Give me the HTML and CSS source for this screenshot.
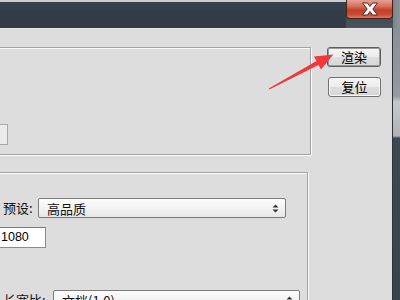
FILE: index.html
```html
<!DOCTYPE html>
<html>
<head>
<meta charset="utf-8">
<link rel="stylesheet" href="styles.css">
</head>
<body>
<div class="window">
  <div class="titlebar">
    <div class="title-fill"></div>
    <div class="close">
      <svg width="20" height="14" viewBox="0 0 20 14"><path d="M2.5 1 L7.5 1 L10 4.5 L12.5 1 L17.5 1 L12.8 7 L17.5 13 L12.5 13 L10 9.5 L7.5 13 L2.5 13 L7.2 7 Z" fill="#ffffff" stroke="#4e2a24" stroke-width="1"/></svg>
    </div>
    <div class="frame-corner"></div>
  </div>
  <div class="body">
    <div class="client">
      <div class="left">
        <div class="group g1"><div class="smallinput"></div></div>
        <div class="group g2">
          <div class="row r1">
            <span class="label l1">预设:</span>
            <div class="select s1"><span>高品质</span>
              <svg width="7" height="9" viewBox="0 0 7 9"><path d="M3.5 0.5 L6.5 3.5 L0.5 3.5 Z M3.5 8.5 L6.5 5.5 L0.5 5.5 Z" fill="#333"/></svg>
            </div>
          </div>
          <div class="row r2"><div class="input">1080</div></div>
          <div class="row r3">
            <span class="label l3">长宽比:</span>
            <div class="select s2"><span>文档(1.0)</span>
              <svg width="7" height="9" viewBox="0 0 7 9"><path d="M3.5 0.5 L6.5 3.5 L0.5 3.5 Z M3.5 8.5 L6.5 5.5 L0.5 5.5 Z" fill="#333"/></svg>
            </div>
          </div>
        </div>
      </div>
      <div class="right">
        <div class="btn btn-default">渲染</div>
        <div class="btn btn-reset">复位</div>
      </div>
    </div>
    <div class="frame"></div>
  </div>
  <svg class="arrow" width="400" height="300" viewBox="0 0 400 300">
    <polygon points="269.3,89.6 268.7,88.4 316.5,61.1 314,56.4 333.4,54.5 321,69.6 318.5,64.9" fill="#ee3a3a"/>
  </svg>
</div>
</body>
</html>
```

FILE: styles.css
```css
html, body {
  margin: 0;
  padding: 0;
  width: 400px;
  height: 300px;
  overflow: hidden;
  background: #dddddd;
}

.window {
  position: relative;
  width: 400px;
  height: 300px;
  overflow: hidden;
  font-family: "Noto Sans CJK SC", "Liberation Sans", sans-serif;
  color: #111;
}

.titlebar {
  display: flex;
  height: 28px;
}

.title-fill {
  flex: 1;
  box-sizing: border-box;
  border-top: 2px solid #c9ccd0;
  background: linear-gradient(to bottom, #3a444e 0%, #333d47 40%, #323c46 100%);
}

.close {
  position: relative;
  width: 47px;
  height: 28px;
  box-sizing: border-box;
  background: linear-gradient(to bottom, #3a444e, #4a535c);
}

.close::after {
  content: "";
  position: absolute;
  left: 0;
  top: 0;
  width: 47px;
  height: 19px;
  box-sizing: border-box;
  border: 1px solid #4a2018;
  border-top: none;
  border-radius: 0 0 4px 4px;
  background: linear-gradient(to bottom, #e6a294 0%, #d7705c 35%, #c4402a 55%, #c94a32 80%, #dd7a60 100%);
  z-index: 0;
}

.close svg {
  position: absolute;
  left: 14px;
  top: 2px;
  z-index: 1;
  display: block;
}

.frame-corner {
  width: 7px;
  background: linear-gradient(to right, #7d848b, #8f959b);
}

.body {
  display: flex;
  height: 272px;
}

.client {
  width: 392px;
  box-sizing: border-box;
  border-top: 1px solid #e6e6e6;
  display: flex;
  align-items: flex-start;
}

.left {
  margin-left: -20px;
  width: 331px;
  flex: none;
}

.group {
  box-sizing: border-box;
  border: 1px solid #a3a3a3;
  box-shadow: inset 1px 1px 0 #fbfbfb, 1px 1px 0 #fbfbfb;
}

.g1 {
  margin-top: 18px;
  width: 331px;
  height: 108px;
  padding-top: 76px;
}

.smallinput {
  width: 27px;
  height: 21px;
  box-sizing: border-box;
  border: 1px solid #a8a8a8;
  background: #ebebeb;
}

.g2 {
  margin-top: 17px;
  width: 328px;
  height: 160px;
  padding-left: 22px;
  padding-top: 25px;
}

.row {
  display: flex;
  align-items: center;
}

.label {
  font-size: 13px;
  line-height: 20px;
  flex: none;
}

.l1 { width: 35px; }
.l3 { width: 50px; }

.select {
  height: 20px;
  box-sizing: border-box;
  border: 1px solid #7c7c7c;
  border-radius: 2px;
  background: linear-gradient(to bottom, #fdfdfd 0%, #f3f3f3 50%, #e6e6e6 100%);
  display: flex;
  align-items: center;
  justify-content: space-between;
  padding: 0 6px 0 8px;
  font-size: 13px;
}

.select svg {
  display: block;
}

.s1 { width: 248px; }
.s2 { width: 247px; }

.r2 {
  margin-top: 9px;
}

.input {
  margin-left: -7px;
  width: 50px;
  height: 21px;
  box-sizing: border-box;
  border: 1px solid #8a8a8a;
  border-top-color: #7a7a7a;
  background: #ffffff;
  font-family: "Liberation Sans", Arial, sans-serif;
  font-size: 12.5px;
  line-height: 19px;
  padding-left: 4px;
  color: #000;
}

.r3 {
  margin-top: 42px;
}

.right {
  display: flex;
  flex-direction: column;
  align-items: flex-start;
}

.btn {
  box-sizing: border-box;
  height: 20px;
  border-radius: 3px;
  background: linear-gradient(to bottom, #f6f6f6 0%, #ececec 50%, #dedede 51%, #d6d6d6 100%);
  font-size: 13px;
  line-height: 18px;
  text-align: center;
  color: #000;
}

.btn-default {
  margin-top: 18px;
  margin-left: 16px;
  width: 54px;
  border: 1px solid #5f5f5f;
  box-shadow: inset 0 0 0 1px #9a9a9a;
}

.btn-reset {
  margin-top: 10px;
  margin-left: 17px;
  width: 53px;
  border: 1px solid #707070;
  box-shadow: inset 0 0 0 1px #f8f8f8;
}

.frame {
  flex: none;
  width: 8px;
  box-sizing: border-box;
  border-left: 1px solid #2c333a;
  background: linear-gradient(to bottom, #8a9097 0px, #959a9f 68px, #c6c9cc 74px, #aeb2b6 108px, #3e4852 110px, #39434d 100%);
}

.arrow {
  position: absolute;
  left: 0;
  top: 0;
  pointer-events: none;
}
```
